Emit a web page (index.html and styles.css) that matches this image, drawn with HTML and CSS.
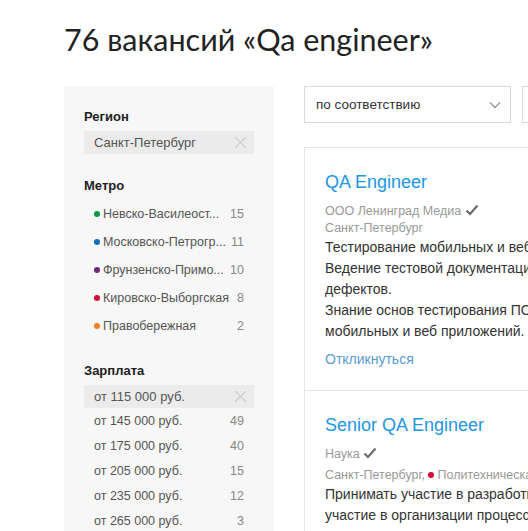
FILE: index.html
```html
<!DOCTYPE html>
<html lang="ru">
<head>
<meta charset="utf-8">
<link rel="stylesheet" href="styles.css">
</head>
<body>
<div class="page">
  <h1 class="title">76 вакансий «Qa engineer»</h1>
  <div class="main">
    <aside class="sidebar">
      <div class="group region">
        <div class="group-title">Регион</div>
        <div class="chip">Санкт-Петербург<span class="x"></span></div>
      </div>
      <div class="group">
        <div class="group-title">Метро</div>
        <ul class="metro">
          <li><span class="name"><i class="dot" style="background:#0a9a45"></i>Невско-Василеост...</span><span class="cnt">15</span></li>
          <li><span class="name"><i class="dot" style="background:#0a6fc2"></i>Московско-Петрогр...</span><span class="cnt">11</span></li>
          <li><span class="name"><i class="dot" style="background:#70287e"></i>Фрунзенско-Примо...</span><span class="cnt">10</span></li>
          <li><span class="name"><i class="dot" style="background:#d6083b"></i>Кировско-Выборгская</span><span class="cnt">8</span></li>
          <li><span class="name"><i class="dot" style="background:#f07e24"></i>Правобережная</span><span class="cnt">2</span></li>
        </ul>
      </div>
      <div class="group">
        <div class="group-title">Зарплата</div>
        <div class="chip salary-chip">от 115 000 руб.<span class="x"></span></div>
        <ul class="salary">
          <li><span>от 145 000 руб.</span><span class="cnt">49</span></li>
          <li><span>от 175 000 руб.</span><span class="cnt">40</span></li>
          <li><span>от 205 000 руб.</span><span class="cnt">15</span></li>
          <li><span>от 235 000 руб.</span><span class="cnt">12</span></li>
          <li><span>от 265 000 руб.</span><span class="cnt">3</span></li>
        </ul>
      </div>
    </aside>
    <section class="results">
      <div class="controls">
        <div class="select">по соответствию
          <svg class="chev" width="12" height="8" viewBox="0 0 12 8"><path d="M1 1.5 L6 6.5 L11 1.5" fill="none" stroke="#9a9a9a" stroke-width="1.5"/></svg>
        </div>
        <div class="select second"></div>
      </div>
      <div class="list">
        <article class="vacancy">
          <a class="v-title">QA Engineer</a>
          <div class="meta">ООО Ленинград Медиа <svg class="check" width="14" height="12" viewBox="0 0 14 12"><path d="M1.5 6.5 L5 10 L12.5 1.5" fill="none" stroke="#666" stroke-width="2"/></svg></div>
          <div class="meta">Санкт-Петербург</div>
          <p class="desc">Тестирование мобильных и веб приложений.<br>Ведение тестовой документации и описание<br>дефектов.<br>Знание основ тестирования ПО, тестирования<br>мобильных и веб приложений.</p>
          <a class="reply">Откликнуться</a>
        </article>
        <article class="vacancy">
          <a class="v-title">Senior QA Engineer</a>
          <div class="meta">Наука <svg class="check" width="14" height="12" viewBox="0 0 14 12"><path d="M1.5 6.5 L5 10 L12.5 1.5" fill="none" stroke="#666" stroke-width="2"/></svg></div>
          <div class="meta metro-line">Санкт-Петербург, <i class="dot" style="background:#d6083b"></i>Политехническая</div>
          <p class="desc">Принимать участие в разработке тестов,<br>участие в организации процессов тестирования</p>
        </article>
      </div>
    </section>
  </div>
</div>
</body>
</html>
```
FILE: styles.css
```css
* { box-sizing: border-box; }
html, body { margin: 0; padding: 0; background: #fff; overflow: hidden; }
body { font-family: "Liberation Sans", Arial, sans-serif; color: #333; }
.page { padding-left: 64px; width: 1000px; }
.title {
  margin: 0;
  padding-top: 19px;
  height: 86px;
  font-family: Lato, "Open Sans", sans-serif;
  font-weight: 400;
  font-size: 30.5px;
  line-height: 40px;
  color: #222;
}
.main { display: flex; gap: 30px; align-items: flex-start; }
.sidebar {
  width: 210px;
  min-height: 460px;
  background: #f7f7f7;
  padding: 23px 20px 0 20px;
}
.group { margin-bottom: 23px; }
.group.region { margin-bottom: 24px; }
.group-title { font-size: 13px; font-weight: bold; color: #222; line-height: 16px; margin-bottom: 6px; }
.chip {
  display: flex; align-items: center; justify-content: space-between;
  height: 23px; background: #ebebeb; padding: 0 8px 0 10px;
  font-size: 13px; color: #555;
}
.x { position: relative; width: 11px; height: 11px; }
.x::before, .x::after {
  content: ""; position: absolute; left: -2px; top: 5px; width: 15px; height: 1.3px; background: #c4c4c4;
}
.x::before { transform: rotate(45deg); }
.x::after { transform: rotate(-45deg); }
ul { list-style: none; margin: 0; padding: 0; }
.metro { margin-top: 6px; }
.metro li {
  display: flex; justify-content: space-between; align-items: center;
  height: 28px; padding: 0 10px 0 10px; font-size: 12.5px; color: #555;
}
.cnt { color: #888; }
.dot { display: inline-block; width: 6px; height: 6px; border-radius: 50%; margin-right: 3px; vertical-align: 1px; }
.metro .name { white-space: nowrap; }
.salary-chip { margin-top: 0; }
.salary li {
  display: flex; justify-content: space-between; align-items: center;
  height: 25px; padding: 0 10px; font-size: 12.5px; color: #555;
}
.results { flex: 1; }
.controls { display: flex; gap: 11px; }
.select {
  width: 207px; height: 37px; border: 1px solid #d9d9d9;
  display: flex; align-items: center; justify-content: space-between;
  padding: 0 9px 0 11px; font-size: 13.5px; color: #333;
}
.select.second { width: 200px; }
.list { margin-top: 24px; border: 1px solid #e6e6e6; width: 400px; }
.vacancy { padding: 23px 20px 22px 20px; border-bottom: 1px solid #e6e6e6; }
.v-title { display: block; font-size: 18px; line-height: 22px; color: #2196e3; margin-bottom: 10px; }
.meta { font-size: 12.5px; color: #999; line-height: 17px; white-space: nowrap; }
.meta.metro-line { margin-top: 4px; }
.check { vertical-align: -1px; }
.desc { margin: 0; font-size: 14px; line-height: 21px; color: #333; white-space: nowrap; }
.reply { display: block; margin-top: 8px; font-size: 14px; line-height: 18px; color: #5a9bd5; }
```
